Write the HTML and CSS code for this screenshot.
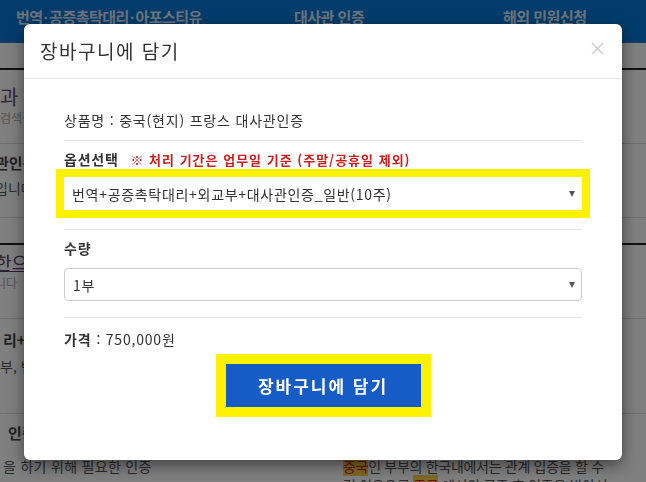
FILE: index.html
```html
<!DOCTYPE html>
<html lang="ko">
<head>
    <meta charset="UTF-8">
    <meta name="viewport" content="width=device-width, initial-scale=1.0">
    <title>장바구니에 담기</title>
    <link rel="stylesheet" href="styles.css">
</head>
<body>

<div class="page">
    <div class="gnb">
        <span class="gnb-item w1">번역<span class="dot">·</span>공증촉탁대리<span class="dot">·</span>아포스티유</span>
        <span class="gnb-item w2">대사관 인증</span>
        <span class="gnb-item">해외 민원신청</span>
    </div>
    <div class="subbar"></div>

    <div class="row r1">
        <div class="t-head">과</div>
        <div class="t-sub">검색결과</div>
    </div>
    <div class="row r2">
        <div class="t-bold shift">관인증</div>
        <div class="t-text shift">입니다</div>
    </div>
    <div class="gap"></div>
    <div class="row r3">
        <div class="t-link shift">한으로</div>
        <div class="t-sub shift">니다</div>
    </div>
    <div class="row r4">
        <div class="t-bold">리+외교부</div>
        <div class="t-text">부, 번역</div>
    </div>
    <div class="r5">
        <div class="t-bold">인증</div>
        <div class="cols">
            <div class="t-text">을 하기 위해 필요한 인증</div>
            <div class="t-text">
                <span class="mark">중국</span>인 부부의 한국내에서는 관계 입증을 할 수<br>
                런 이유으로 <span class="mark">중국</span> 에서의 공증 후 인증을 받아서
            </div>
        </div>
    </div>
</div>

<div class="backdrop"></div>

<div class="modal">
    <div class="modal-header">
        <h4 class="modal-title">장바구니에 담기</h4>
        <svg class="close" width="13" height="13" viewBox="0 0 13 13">
            <path d="M1 1 L12 12 M12 1 L1 12" stroke="#c8c8c8" stroke-width="1.3" fill="none"/>
        </svg>
    </div>
    <div class="modal-body">
        <div class="info">상품명 : 중국(현지) 프랑스 대사관인증</div>
        <hr class="line l1">

        <div class="label">옵션선택 <span class="note">※ 처리 기간은 업무일 기준 (주말/공휴일 제외)</span></div>
        <div class="hl">
            <div class="select-wrap">
                <select id="option">
                    <option>번역+공증촉탁대리+외교부+대사관인증_일반(10주)</option>
                </select>
            </div>
        </div>
        <hr class="line l2">

        <div class="label lb2">수량</div>
        <div class="select-wrap qty">
            <select id="qty">
                <option>1부</option>
                <option>2부</option>
                <option>3부</option>
            </select>
        </div>
        <hr class="line l3">

        <div class="info"><b class="price-label">가격</b><span>: 750,000원</span></div>

        <div class="cart">
            <div class="cart-box">
                <button type="button" class="cart-btn">장바구니에 담기</button>
            </div>
        </div>
    </div>
</div>

</body>
</html>
```

FILE: styles.css
```css
body {
    margin: 0;
    overflow: hidden;
    background-color: #fff;
    font-family: "Noto Sans CJK KR", "Liberation Sans", sans-serif;
}

.page {
    color: #555;
}

.gnb {
    display: flex;
    height: 43px;
    padding-left: 16px;
    background-color: #0478d8;
}

.gnb-item {
    padding-top: 7px;
    font-size: 15px;
    line-height: 20px;
    font-weight: bold;
    letter-spacing: -0.5px;
    color: #dce8f6;
    white-space: nowrap;
}

.dot {
    font-family: "Liberation Sans", sans-serif;
    padding: 0 1px;
}

.w1 {
    width: 278px;
}

.w2 {
    width: 209px;
}

.subbar {
    height: 25px;
    border-bottom: 2px solid #222;
    background-color: #fff;
}

.row {
    border-bottom: 1px solid #ddd;
    white-space: nowrap;
    overflow: hidden;
}

.r1 {
    height: 57px;
    padding-top: 16px;
}

.r2 {
    height: 63px;
    padding-top: 10px;
}

.r3 {
    height: 66px;
    padding-top: 7px;
    border-top: 2px solid #222;
}

.r4 {
    height: 82px;
    padding-top: 12px;
}

.r5 {
    padding-top: 10px;
    white-space: nowrap;
    overflow: hidden;
}

.gap {
    height: 25px;
}

.shift {
    margin-left: -5px;
}

.t-head {
    font-size: 20px;
    line-height: 22px;
    color: #6a4a6a;
}

.t-sub {
    margin-top: 2px;
    font-size: 12px;
    line-height: 16px;
    color: #aaa;
}

.t-bold {
    font-size: 15px;
    line-height: 18px;
    font-weight: bold;
    color: #444;
}

.r4 .t-bold {
    margin-left: 3px;
}

.r5 .t-bold {
    margin-left: 8px;
}

.t-text {
    margin-top: 7px;
    font-size: 14px;
    line-height: 18px;
    color: #555;
}

.r4 .t-text {
    margin-top: 8px;
}

.t-link {
    font-size: 18px;
    line-height: 20px;
    color: #5a3a6a;
    text-decoration: underline;
}

.r3 .t-sub {
    margin-top: 3px;
}

.cols {
    display: grid;
    grid-template-columns: 343px 1fr;
    margin-top: 15px;
}

.cols .t-text {
    margin-top: 0;
    line-height: 19px;
    letter-spacing: -0.3px;
}

.cols .t-text:first-child {
    padding-left: 3px;
    letter-spacing: 0.3px;
}

.mark {
    background-color: #ffd24a;
    color: #d41e1e;
}

.backdrop {
    position: fixed;
    top: 0;
    left: 0;
    right: 0;
    bottom: 0;
    background-color: rgba(0, 0, 0, 0.5);
}

.modal {
    position: absolute;
    top: 24px;
    left: 24px;
    width: 598px;
    background-color: #fff;
    border-radius: 6px;
    box-shadow: 0 5px 15px rgba(0, 0, 0, 0.5);
    color: #333;
}

.modal-header {
    display: flex;
    justify-content: space-between;
    align-items: center;
    padding: 15px 18px 15px 16px;
    border-bottom: 1px solid #e5e5e5;
}

.modal-title {
    margin: 0;
    font-size: 19px;
    line-height: 24px;
    font-weight: normal;
    letter-spacing: 1.5px;
}

.close {
    margin-top: -6px;
}

.modal-body {
    padding: 31px 40px 43px;
    letter-spacing: 0.8px;
}

.info {
    font-size: 14px;
    line-height: 20px;
}

.price-label {
    margin-right: 5px;
}

.line {
    border: 0;
    border-top: 1px solid #e5e5e5;
    margin: 0;
}

.l1 {
    margin: 10px 0 9px;
}

.l2 {
    margin: 11px 0 9px;
}

.l3 {
    margin: 16px 0 11px;
}

.label {
    font-size: 14px;
    line-height: 18px;
    font-weight: bold;
}

.lb2 {
    margin-bottom: 11px;
}

.note {
    margin-left: 7px;
    font-size: 13px;
    letter-spacing: 1px;
    color: #d01c1c;
}

.hl {
    margin: 0 -8px;
    padding: 8px;
    background-color: #fff200;
}

.select-wrap {
    position: relative;
}

.select-wrap::after {
    content: "";
    position: absolute;
    right: 7px;
    top: 50%;
    margin-top: -3px;
    border-left: 3px solid transparent;
    border-right: 3px solid transparent;
    border-top: 6px solid #555;
}

select {
    appearance: none;
    display: block;
    width: 100%;
    height: 33px;
    padding: 0 8px;
    border: 0;
    background-color: #fff;
    font-family: "Noto Sans CJK KR", sans-serif;
    font-size: 14px;
    letter-spacing: 0.7px;
    color: #333;
}

.qty select {
    border: 1px solid #ccc;
    border-radius: 4px;
}

.cart {
    display: flex;
    justify-content: center;
    margin-top: 5px;
}

.cart-box {
    padding: 10px;
    background-color: #fff200;
}

.cart-btn {
    display: block;
    width: 195px;
    height: 43px;
    border: none;
    background-color: #165cc6;
    color: #fff;
    font-family: "Noto Sans CJK KR", sans-serif;
    font-size: 17px;
    font-weight: bold;
    letter-spacing: 2px;
    cursor: pointer;
}
```
